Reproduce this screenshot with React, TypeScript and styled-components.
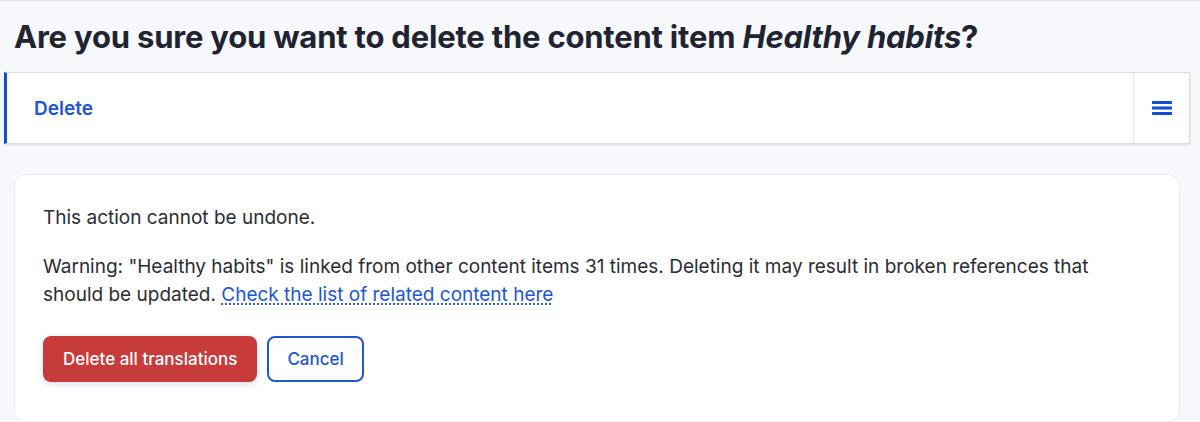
import React from "react";
import styled, { createGlobalStyle } from "styled-components";

const GlobalStyle = createGlobalStyle`
  html, body {
    margin: 0;
    padding: 0;
    background: #f7f8fc;
    font-family: Inter, "Noto Sans", sans-serif;
    color: #232429;
  }
`;

const Page = styled.div`
  border-top: 1px solid #e4e5ea;
  padding: 0 10px 0 4px;
`;

const Title = styled.h1`
  margin: 16px 0 0 10px;
  font-size: 31px;
  line-height: 40px;
  font-weight: 700;
  letter-spacing: -0.2px;
  color: #222330;

  em {
    font-style: italic;
  }
`;

const TabBar = styled.div`
  margin-top: 15px;
  display: flex;
  height: 70px;
  background: #fff;
  border: 1px solid #dcdde3;
  border-left: 3px solid #0f4fd6;
  box-shadow: 0 1px 2px rgba(0, 0, 0, 0.12);
`;

const Tab = styled.a`
  flex: 1;
  display: flex;
  align-items: center;
  padding-left: 27px;
  font-size: 19px;
  font-weight: 600;
  color: #1c57d4;
  text-decoration: none;
`;

const MenuButton = styled.button`
  width: 56px;
  border: none;
  border-left: 1px solid #e2e3e8;
  background: #fff;
  display: flex;
  align-items: center;
  justify-content: center;
  padding: 0;
  cursor: pointer;
`;

const Card = styled.section`
  margin: 30px 10px 0 10px;
  background: #fff;
  border: 1px solid #ebecf1;
  border-radius: 12px;
  padding: 29px 28px 39px;
`;

const Text = styled.p`
  margin: 0 0 21px;
  font-size: 19px;
  line-height: 28px;
  color: #2b2c33;

  &:last-of-type {
    margin-bottom: 0;
  }
`;

const Link = styled.a`
  color: #1c57d4;
  text-decoration: underline dotted;
  text-underline-offset: 3px;
`;

const Actions = styled.div`
  display: flex;
  gap: 10px;
  margin-top: 27px;
`;

const Button = styled.button<{ $primary?: boolean }>`
  height: 46px;
  padding: 0 18px;
  border-radius: 8px;
  font-family: inherit;
  font-size: 17px;
  font-weight: 500;
  cursor: pointer;
  border: 2px solid ${({ $primary }) => ($primary ? "#c83b3b" : "#1c57d4")};
  background: ${({ $primary }) => ($primary ? "#c83b3b" : "#fff")};
  color: ${({ $primary }) => ($primary ? "#fff" : "#1c57d4")};
  box-shadow: ${({ $primary }) =>
    $primary ? "0 2px 6px rgba(40, 60, 140, 0.18)" : "none"};
`;

const MenuIcon = () => (
  <svg width="20" height="15" viewBox="0 0 20 15">
    <rect x="0" y="0" width="20" height="3" rx="0.5" fill="#0f4fd6" />
    <rect x="0" y="5.5" width="20" height="3" rx="0.5" fill="#0f4fd6" />
    <rect x="0" y="11" width="20" height="3" rx="0.5" fill="#0f4fd6" />
  </svg>
);

const App: React.FC = () => (
  <>
    <GlobalStyle />
    <Page>
      <Title>
        Are you sure you want to delete the content item <em>Healthy habits</em>?
      </Title>
      <TabBar>
        <Tab href="#">Delete</Tab>
        <MenuButton aria-label="Menu">
          <MenuIcon />
        </MenuButton>
      </TabBar>
      <Card>
        <Text>This action cannot be undone.</Text>
        <Text>
          Warning: "Healthy habits" is linked from other content items 31 times. Deleting it may
          result in broken references that should be updated.{" "}
          <Link href="#">Check the list of related content here</Link>
        </Text>
        <Actions>
          <Button $primary>Delete all translations</Button>
          <Button>Cancel</Button>
        </Actions>
      </Card>
    </Page>
  </>
);

export default App;
